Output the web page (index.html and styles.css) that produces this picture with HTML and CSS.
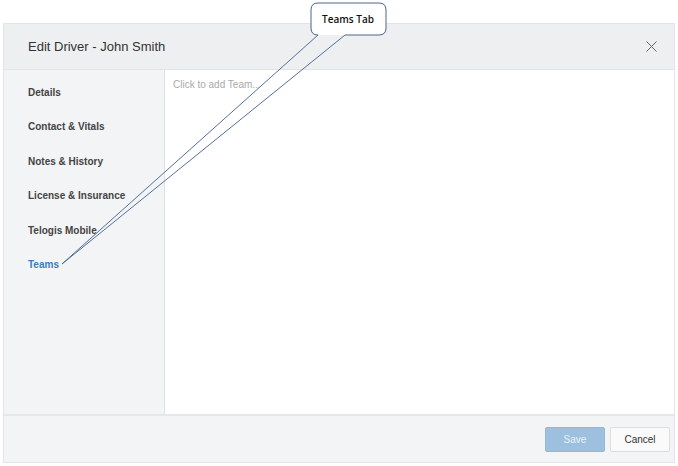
FILE: index.html
```html
<!DOCTYPE html>
<html lang="en">
<head>
    <meta charset="UTF-8">
    <title>Edit Driver - John Smith</title>
    <link rel="stylesheet" href="styles.css">
</head>
<body>

<!-- Dialog -->
<div class="page">
    <div class="dialog">
        <div class="dialog-header">
            <span class="dialog-title">Edit Driver - John Smith</span>
            <svg class="close-icon" width="11" height="11" viewBox="0 0 11 11">
                <path d="M0.5 0.5 L10.5 10.5 M10.5 0.5 L0.5 10.5" stroke="#666" stroke-width="1" fill="none"/>
            </svg>
        </div>

        <div class="dialog-main">
            <div class="side-nav">
                <div class="nav-item">Details</div>
                <div class="nav-item">Contact &amp; Vitals</div>
                <div class="nav-item">Notes &amp; History</div>
                <div class="nav-item">License &amp; Insurance</div>
                <div class="nav-item">Telogis Mobile</div>
                <div class="nav-item active">Teams</div>
            </div>
            <div class="content">
                <div class="placeholder">Click to add Team...</div>
            </div>
        </div>

        <div class="dialog-footer">
            <button class="btn btn-save">Save</button>
            <button class="btn btn-cancel">Cancel</button>
        </div>
    </div>
</div>

<!-- Callout "Teams Tab" -->
<svg class="callout" width="678" height="466" viewBox="0 0 678 466">
    <path d="M318 35 L62 264 L345 35" fill="none" stroke="#566f9a" stroke-width="1"/>
    <path d="M318 35 Q311 35 311 28 L311 10 Q311 3 318 3 L379 3 Q386 3 386 10 L386 28 Q386 35 379 35 L345 35"
          fill="#fff" stroke="#4a6490" stroke-width="1"/>
    <text x="348" y="23" text-anchor="middle" class="callout-text">Teams Tab</text>
</svg>

</body>
</html>
```

FILE: styles.css
```css
body {
    margin: 0;
    background-color: #fff;
    font-family: "Liberation Sans", Arial, sans-serif;
}

.page {
    padding: 23px 3px 3px 3px;
}

.dialog {
    width: 672px;
    height: 440px;
    border: 1px solid #e3e4e6;
    box-sizing: border-box;
    display: flex;
    flex-direction: column;
}

.dialog-header {
    height: 45px;
    flex-shrink: 0;
    background-color: #eeeff1;
    border-bottom: 1px solid #e2e3e5;
    display: flex;
    align-items: center;
    justify-content: space-between;
    padding: 0 17px 0 24px;
}

.dialog-title {
    font-size: 13px;
    color: #333;
}

.dialog-main {
    flex: 1;
    display: flex;
}

.side-nav {
    width: 160px;
    background-color: #f3f4f6;
    border-right: 1px solid #e0e1e3;
    padding-top: 6px;
}

.nav-item {
    height: 34.4px;
    line-height: 34.4px;
    padding-left: 24px;
    font-size: 10px;
    font-weight: bold;
    color: #444;
}

.nav-item.active {
    color: #3d7cc0;
}

.content {
    flex: 1;
    background-color: #fff;
    padding: 9px 8px;
}

.placeholder {
    font-size: 10px;
    line-height: 12px;
    color: #aaa;
}

.dialog-footer {
    height: 46px;
    flex-shrink: 0;
    background-color: #f3f4f6;
    border-top: 2px solid #e6e7e9;
    display: flex;
    align-items: center;
    justify-content: flex-end;
    gap: 5px;
    padding-right: 4px;
}

.btn {
    width: 60px;
    height: 25px;
    font-family: "Liberation Sans", Arial, sans-serif;
    font-size: 10px;
    border-radius: 2px;
}

.btn-save {
    background-color: #9dc0de;
    border: 1px solid #93b7d7;
    color: #e8f0f7;
}

.btn-cancel {
    background-color: #fafafa;
    border: 1px solid #dedede;
    color: #333;
}

.callout {
    position: absolute;
    top: 0;
    left: 0;
    pointer-events: none;
}

.callout-text {
    font-family: "Open Sans", Lato, sans-serif;
    font-size: 10px;
    font-weight: 600;
    fill: #111;
}
```
